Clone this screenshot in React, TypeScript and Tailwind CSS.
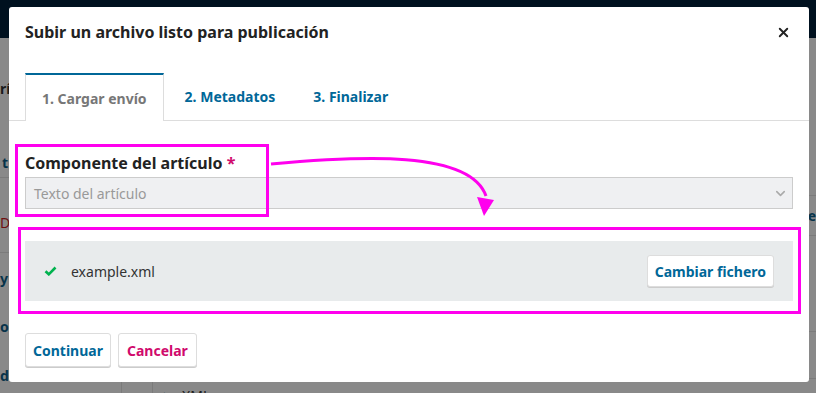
import { X, ChevronDown } from "lucide-react";

const Check = () => (
  <svg width="13" height="10" viewBox="0 0 13 10" className="shrink-0">
    <path d="M1.5 5.2 L4.8 8.3 L11.5 1.5" fill="none" stroke="#00b24e" strokeWidth="2.6" />
  </svg>
);

const Background = () => (
  <div className="absolute inset-0 flex flex-col">
    <div className="h-[38px] shrink-0 bg-[#00111f]" />
    <div className="flex flex-1 text-[14px] font-bold">
      {/* page sidebar, mostly under the modal */}
      <div className="w-[122px] border-r border-[#7b7b7b] flex flex-col">
        <div className="h-[100px] shrink-0 flex items-center text-[#1b1b1b]">rí</div>
        <div className="h-[40px] shrink-0 flex items-end pb-[4px] pl-[2px] text-[#07334a] border-b border-[#7b7b7b]">t</div>
        <div className="h-[75px] shrink-0 pt-[34px] text-[#6e1010] font-normal border-b border-[#7b7b7b]">D</div>
        <div className="h-[50px] shrink-0 flex items-center text-[#07334a]">y</div>
        <div className="h-[46px] shrink-0 flex items-center text-[#07334a]">o</div>
        <div className="h-[52px] shrink-0 flex items-center text-[#07334a]">da</div>
      </div>
      <div className="w-[31px] border-r border-[#7b7b7b]" />
      <div className="flex-1 flex flex-col">
        <div className="h-[158px] shrink-0 border-b border-[#7b7b7b]" />
        <div className="h-[40px] shrink-0 border-b border-[#7b7b7b] flex items-center justify-end text-[#07334a]">
          e
        </div>
        <div className="h-[96px] shrink-0 border-b border-[#7b7b7b]" />
        <div className="h-[47px] shrink-0 border-b border-[#7b7b7b]" />
        <div className="shrink-0 flex items-center gap-[10px] pl-[11px] pt-[6px] font-normal text-[#1b1b1b]">
          <span className="text-[10px] text-[#07334a]">▶</span>
          <span>XML</span>
        </div>
      </div>
    </div>
  </div>
);

const Modal = () => (
  <div className="absolute left-[9px] top-[7px] w-[800px] h-[375px] bg-white rounded-[3px] flex flex-col font-['Noto_Sans',sans-serif]">
    <div className="h-[50px] flex items-center justify-between pl-4 pr-[18px]">
      <h2 className="text-[16px] font-bold text-[#222] leading-5">
        Subir un archivo listo para publicación
      </h2>
      <X size={15} strokeWidth={3} className="text-[#222]" />
    </div>

    <div className="mt-4 flex pl-4 border-b border-[#ddd] h-[48px] text-[14px] font-bold">
      <div className="-mb-px bg-white border-t-2 border-[#006798] border-x border-x-[#ddd] px-4 flex items-center text-[#777]">
        1. Cargar envío
      </div>
      <div className="ml-[2px] px-[19px] flex items-center text-[#006798]">2. Metadatos</div>
      <div className="px-[19px] flex items-center text-[#006798]">3. Finalizar</div>
    </div>

    <div className="px-4 pt-[32px] flex flex-col">
      <label className="text-[16px] font-bold text-[#222] leading-5">
        Componente del artículo <span className="text-[#d00a6c]">*</span>
      </label>
      <div className="mt-[4px] h-[32px] bg-[#eff0f2] border border-[#ccc] flex items-center justify-between pl-[8px] pr-[4px]">
        <span className="text-[14px] text-[#999]">Texto del artículo</span>
        <ChevronDown size={15} strokeWidth={2.5} className="text-[#aaa]" />
      </div>

      <div className="mt-[32px] h-[60px] bg-[#e8ebec] flex items-center justify-between pl-[19px] pr-[19px]">
        <div className="flex items-center gap-[14px]">
          <Check />
          <span className="text-[14px] text-[#333]">example.xml</span>
        </div>
        <button className="h-[32px] px-[7px] bg-white rounded-[3px] border border-[#ddd] shadow-[0_1px_0_#ccc] text-[14px] font-bold text-[#006798]">
          Cambiar fichero
        </button>
      </div>

      <div className="mt-[32px] flex gap-[7px]">
        <button className="h-[34px] px-[7px] bg-white rounded-[3px] border border-[#ddd] shadow-[0_1px_0_#ccc] text-[14px] font-bold text-[#006798]">
          Continuar
        </button>
        <button className="h-[34px] px-[8px] bg-white rounded-[3px] border border-[#ddd] shadow-[0_1px_0_#ccc] text-[14px] font-bold text-[#d00a6c]">
          Cancelar
        </button>
      </div>
    </div>
  </div>
);

const Annotations = () => (
  <>
    <div className="absolute left-[15px] top-[144px] w-[254px] h-[73px] border-[3px] border-[#ff00ee]" />
    <div className="absolute left-[18px] top-[227px] w-[783px] h-[87px] border-[3px] border-[#ff00ee]" />
    <svg className="absolute left-0 top-0" width="816" height="393">
      <path d="M271 164 C 360 156, 470 150, 486 196" fill="none" stroke="#ff00ee" strokeWidth="3" />
      <polygon points="477,197 494,200 484,216" fill="#ff00ee" />
    </svg>
  </>
);

export default function App() {
  return (
    <div className="relative w-[816px] h-[393px] overflow-hidden bg-[#898989] font-['Noto_Sans',sans-serif]">
      <Background />
      <Modal />
      <Annotations />
    </div>
  );
}
